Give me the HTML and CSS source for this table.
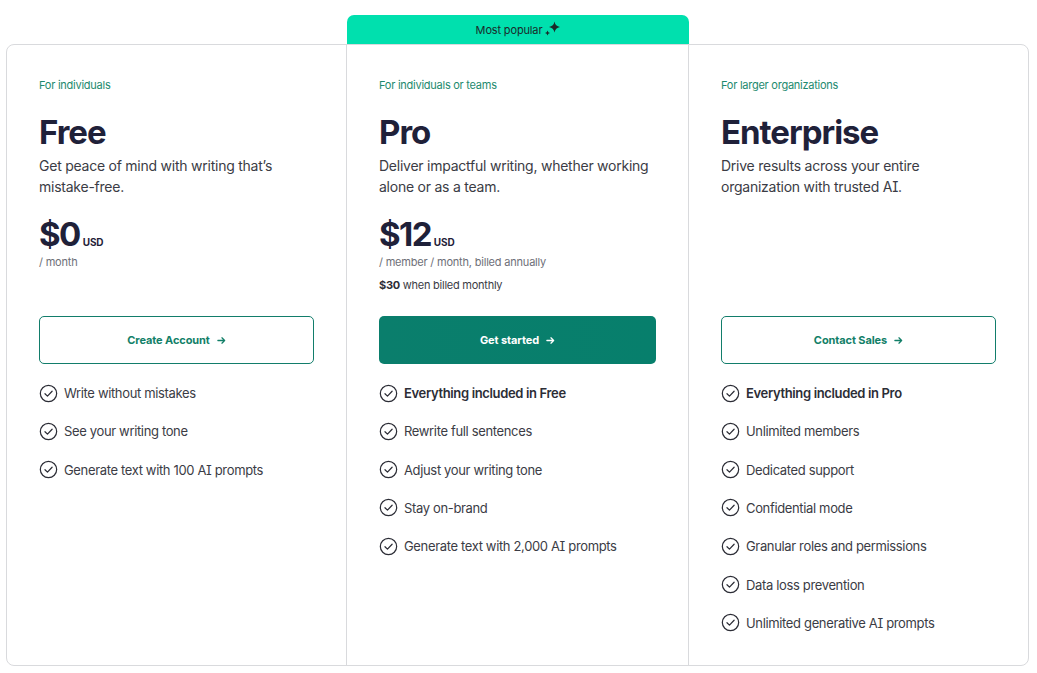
FILE: index.html
```html
<!DOCTYPE html>
<html lang="en">
<head>
<meta charset="utf-8">
<title>Plans</title>
<link rel="stylesheet" href="styles.css">
</head>
<body>
<div class="plans">
  <div class="badge-row">
    <div class="badge">
      <span>Most popular</span>
      <svg class="sparkle" viewBox="0 0 16 16" width="16" height="16"><path d="M10.5 0.5 Q11.3 5.2 16 6 Q11.3 6.8 10.5 11.5 Q9.7 6.8 5 6 Q9.7 5.2 10.5 0.5Z" fill="#1b2a2a"/><path d="M3.5 9.5 Q3.9 11.6 6 12 Q3.9 12.4 3.5 14.5 Q3.1 12.4 1 12 Q3.1 11.6 3.5 9.5Z" fill="#1b2a2a"/></svg>
    </div>
  </div>
  <div class="box">
    <section class="col">
      <div class="head">
        <p class="label">For individuals</p>
        <h2 class="title">Free</h2>
        <p class="desc">Get peace of mind with writing that’s mistake-free.</p>
        <div class="price"><span class="amount">$0</span><span class="cur">USD</span></div>
        <p class="per">/ month</p>
      </div>
      <a class="btn btn-outline" href="#">Create Account <svg class="arrow" viewBox="0 0 10 10" width="9" height="9"><path d="M1 5h7.5M5.5 2l3 3-3 3" fill="none" stroke="currentColor" stroke-width="1.4" stroke-linecap="round" stroke-linejoin="round"/></svg></a>
      <ul class="features">
        <li><svg class="check" viewBox="0 0 20 20" width="19" height="19"><circle cx="10" cy="10" r="8.6" fill="none" stroke="#2c2d36" stroke-width="1.3"/><path d="M6.3 10.2l2.6 2.6 4.9-5.2" fill="none" stroke="#2c2d36" stroke-width="1.3" stroke-linecap="round" stroke-linejoin="round"/></svg>Write without mistakes</li>
        <li><svg class="check" viewBox="0 0 20 20" width="19" height="19"><circle cx="10" cy="10" r="8.6" fill="none" stroke="#2c2d36" stroke-width="1.3"/><path d="M6.3 10.2l2.6 2.6 4.9-5.2" fill="none" stroke="#2c2d36" stroke-width="1.3" stroke-linecap="round" stroke-linejoin="round"/></svg>See your writing tone</li>
        <li><svg class="check" viewBox="0 0 20 20" width="19" height="19"><circle cx="10" cy="10" r="8.6" fill="none" stroke="#2c2d36" stroke-width="1.3"/><path d="M6.3 10.2l2.6 2.6 4.9-5.2" fill="none" stroke="#2c2d36" stroke-width="1.3" stroke-linecap="round" stroke-linejoin="round"/></svg>Generate text with 100 AI prompts</li>
      </ul>
    </section>
    <section class="col">
      <div class="head">
        <p class="label">For individuals or teams</p>
        <h2 class="title">Pro</h2>
        <p class="desc">Deliver impactful writing, whether working alone or as a team.</p>
        <div class="price"><span class="amount">$12</span><span class="cur">USD</span></div>
        <p class="per">/ member / month, billed annually</p>
        <p class="monthly"><b>$30</b> when billed monthly</p>
      </div>
      <a class="btn btn-solid" href="#">Get started <svg class="arrow" viewBox="0 0 10 10" width="9" height="9"><path d="M1 5h7.5M5.5 2l3 3-3 3" fill="none" stroke="currentColor" stroke-width="1.4" stroke-linecap="round" stroke-linejoin="round"/></svg></a>
      <ul class="features">
        <li class="strong"><svg class="check" viewBox="0 0 20 20" width="19" height="19"><circle cx="10" cy="10" r="8.6" fill="none" stroke="#2c2d36" stroke-width="1.3"/><path d="M6.3 10.2l2.6 2.6 4.9-5.2" fill="none" stroke="#2c2d36" stroke-width="1.3" stroke-linecap="round" stroke-linejoin="round"/></svg>Everything included in Free</li>
        <li><svg class="check" viewBox="0 0 20 20" width="19" height="19"><circle cx="10" cy="10" r="8.6" fill="none" stroke="#2c2d36" stroke-width="1.3"/><path d="M6.3 10.2l2.6 2.6 4.9-5.2" fill="none" stroke="#2c2d36" stroke-width="1.3" stroke-linecap="round" stroke-linejoin="round"/></svg>Rewrite full sentences</li>
        <li><svg class="check" viewBox="0 0 20 20" width="19" height="19"><circle cx="10" cy="10" r="8.6" fill="none" stroke="#2c2d36" stroke-width="1.3"/><path d="M6.3 10.2l2.6 2.6 4.9-5.2" fill="none" stroke="#2c2d36" stroke-width="1.3" stroke-linecap="round" stroke-linejoin="round"/></svg>Adjust your writing tone</li>
        <li><svg class="check" viewBox="0 0 20 20" width="19" height="19"><circle cx="10" cy="10" r="8.6" fill="none" stroke="#2c2d36" stroke-width="1.3"/><path d="M6.3 10.2l2.6 2.6 4.9-5.2" fill="none" stroke="#2c2d36" stroke-width="1.3" stroke-linecap="round" stroke-linejoin="round"/></svg>Stay on-brand</li>
        <li><svg class="check" viewBox="0 0 20 20" width="19" height="19"><circle cx="10" cy="10" r="8.6" fill="none" stroke="#2c2d36" stroke-width="1.3"/><path d="M6.3 10.2l2.6 2.6 4.9-5.2" fill="none" stroke="#2c2d36" stroke-width="1.3" stroke-linecap="round" stroke-linejoin="round"/></svg>Generate text with 2,000 AI prompts</li>
      </ul>
    </section>
    <section class="col">
      <div class="head">
        <p class="label">For larger organizations</p>
        <h2 class="title">Enterprise</h2>
        <p class="desc">Drive results across your entire organization with trusted AI.</p>
      </div>
      <a class="btn btn-outline" href="#">Contact Sales <svg class="arrow" viewBox="0 0 10 10" width="9" height="9"><path d="M1 5h7.5M5.5 2l3 3-3 3" fill="none" stroke="currentColor" stroke-width="1.4" stroke-linecap="round" stroke-linejoin="round"/></svg></a>
      <ul class="features">
        <li class="strong"><svg class="check" viewBox="0 0 20 20" width="19" height="19"><circle cx="10" cy="10" r="8.6" fill="none" stroke="#2c2d36" stroke-width="1.3"/><path d="M6.3 10.2l2.6 2.6 4.9-5.2" fill="none" stroke="#2c2d36" stroke-width="1.3" stroke-linecap="round" stroke-linejoin="round"/></svg>Everything included in Pro</li>
        <li><svg class="check" viewBox="0 0 20 20" width="19" height="19"><circle cx="10" cy="10" r="8.6" fill="none" stroke="#2c2d36" stroke-width="1.3"/><path d="M6.3 10.2l2.6 2.6 4.9-5.2" fill="none" stroke="#2c2d36" stroke-width="1.3" stroke-linecap="round" stroke-linejoin="round"/></svg>Unlimited members</li>
        <li><svg class="check" viewBox="0 0 20 20" width="19" height="19"><circle cx="10" cy="10" r="8.6" fill="none" stroke="#2c2d36" stroke-width="1.3"/><path d="M6.3 10.2l2.6 2.6 4.9-5.2" fill="none" stroke="#2c2d36" stroke-width="1.3" stroke-linecap="round" stroke-linejoin="round"/></svg>Dedicated support</li>
        <li><svg class="check" viewBox="0 0 20 20" width="19" height="19"><circle cx="10" cy="10" r="8.6" fill="none" stroke="#2c2d36" stroke-width="1.3"/><path d="M6.3 10.2l2.6 2.6 4.9-5.2" fill="none" stroke="#2c2d36" stroke-width="1.3" stroke-linecap="round" stroke-linejoin="round"/></svg>Confidential mode</li>
        <li><svg class="check" viewBox="0 0 20 20" width="19" height="19"><circle cx="10" cy="10" r="8.6" fill="none" stroke="#2c2d36" stroke-width="1.3"/><path d="M6.3 10.2l2.6 2.6 4.9-5.2" fill="none" stroke="#2c2d36" stroke-width="1.3" stroke-linecap="round" stroke-linejoin="round"/></svg>Granular roles and permissions</li>
        <li><svg class="check" viewBox="0 0 20 20" width="19" height="19"><circle cx="10" cy="10" r="8.6" fill="none" stroke="#2c2d36" stroke-width="1.3"/><path d="M6.3 10.2l2.6 2.6 4.9-5.2" fill="none" stroke="#2c2d36" stroke-width="1.3" stroke-linecap="round" stroke-linejoin="round"/></svg>Data loss prevention</li>
        <li><svg class="check" viewBox="0 0 20 20" width="19" height="19"><circle cx="10" cy="10" r="8.6" fill="none" stroke="#2c2d36" stroke-width="1.3"/><path d="M6.3 10.2l2.6 2.6 4.9-5.2" fill="none" stroke="#2c2d36" stroke-width="1.3" stroke-linecap="round" stroke-linejoin="round"/></svg>Unlimited generative AI prompts</li>
      </ul>
    </section>
  </div>
</div>
</body>
</html>
```
FILE: styles.css
```css
* { box-sizing: border-box; }
html, body { margin: 0; padding: 0; background: #ffffff; }
body {
  font-family: Inter, "Noto Sans", "Liberation Sans", sans-serif;
  font-feature-settings: "cv08";
  color: #3b3c45;
  -webkit-font-smoothing: antialiased;
}
p, h2, ul { margin: 0; padding: 0; }

.plans {
  width: 1023px;
  margin: 15px 0 0 6px;
}

.badge-row {
  display: grid;
  grid-template-columns: 340px 342px 339px;
  padding-left: 1px;
}
.badge {
  grid-column: 2;
  height: 29px;
  background: #00e0ae;
  border-radius: 7px 7px 0 0;
  display: flex;
  align-items: center;
  justify-content: center;
  gap: 2px;
  font-size: 11px;
  letter-spacing: -0.15px;
  color: #1b2a2a;
  padding-top: 1px;
}
.sparkle { margin-top: -3px; }

.box {
  display: grid;
  grid-template-columns: 340px 342px 339px;
  border: 1px solid #d9dadd;
  border-radius: 8px;
}
.col {
  padding: 32px 32px 32px;
  border-right: 1px solid #d9dadd;
  display: flex;
  flex-direction: column;
}
.col:last-child { border-right: none; }

.head { height: 239px; }

.label {
  font-size: 11px;
  line-height: 16px;
  letter-spacing: -0.25px;
  color: #1d8a6e;
}
.title {
  margin-top: 19px;
  font-size: 33px;
  line-height: 40px;
  font-weight: 700;
  color: #1f2139;
  letter-spacing: -1px;
}
.desc {
  margin-top: 3px;
  font-size: 14px;
  line-height: 21px;
  letter-spacing: -0.24px;
  color: #3b3c45;
}
.price {
  margin-top: 17px;
  display: flex;
  align-items: baseline;
  gap: 3px;
  color: #1f2139;
}
.amount {
  font-size: 33px;
  line-height: 40px;
  font-weight: 700;
  letter-spacing: -1.6px;
}
.cur {
  font-size: 10px;
  font-weight: 700;
  letter-spacing: -0.1px;
}
.per {
  font-size: 11px;
  line-height: 16px;
  letter-spacing: -0.2px;
  color: #6e6f78;
}
.monthly {
  margin-top: 7px;
  font-size: 11px;
  line-height: 16px;
  letter-spacing: -0.25px;
  color: #3b3c45;
}
.monthly b { color: #2c2d36; font-weight: 700; }

.btn {
  height: 48px;
  border-radius: 5px;
  display: flex;
  align-items: center;
  justify-content: center;
  gap: 7px;
  font-size: 11px;
  font-weight: 700;
  letter-spacing: -0.1px;
  text-decoration: none;
}
.btn-outline {
  border: 1px solid #127d6b;
  color: #127f68;
  background: #fff;
}
.btn-solid {
  background: linear-gradient(90deg, #0a7e6c, #077f6c);
  color: #ffffff;
}
.arrow { display: block; }

.features {
  list-style: none;
  margin-top: 19px;
  display: flex;
  flex-direction: column;
  gap: 18.33px;
}
.features li {
  display: flex;
  align-items: center;
  gap: 6px;
  height: 20px;
  font-size: 13px;
  letter-spacing: -0.35px;
  color: #3b3c45;
}
.features li.strong { font-weight: 600; color: #2c2d36; }
.check { flex: none; }
```
